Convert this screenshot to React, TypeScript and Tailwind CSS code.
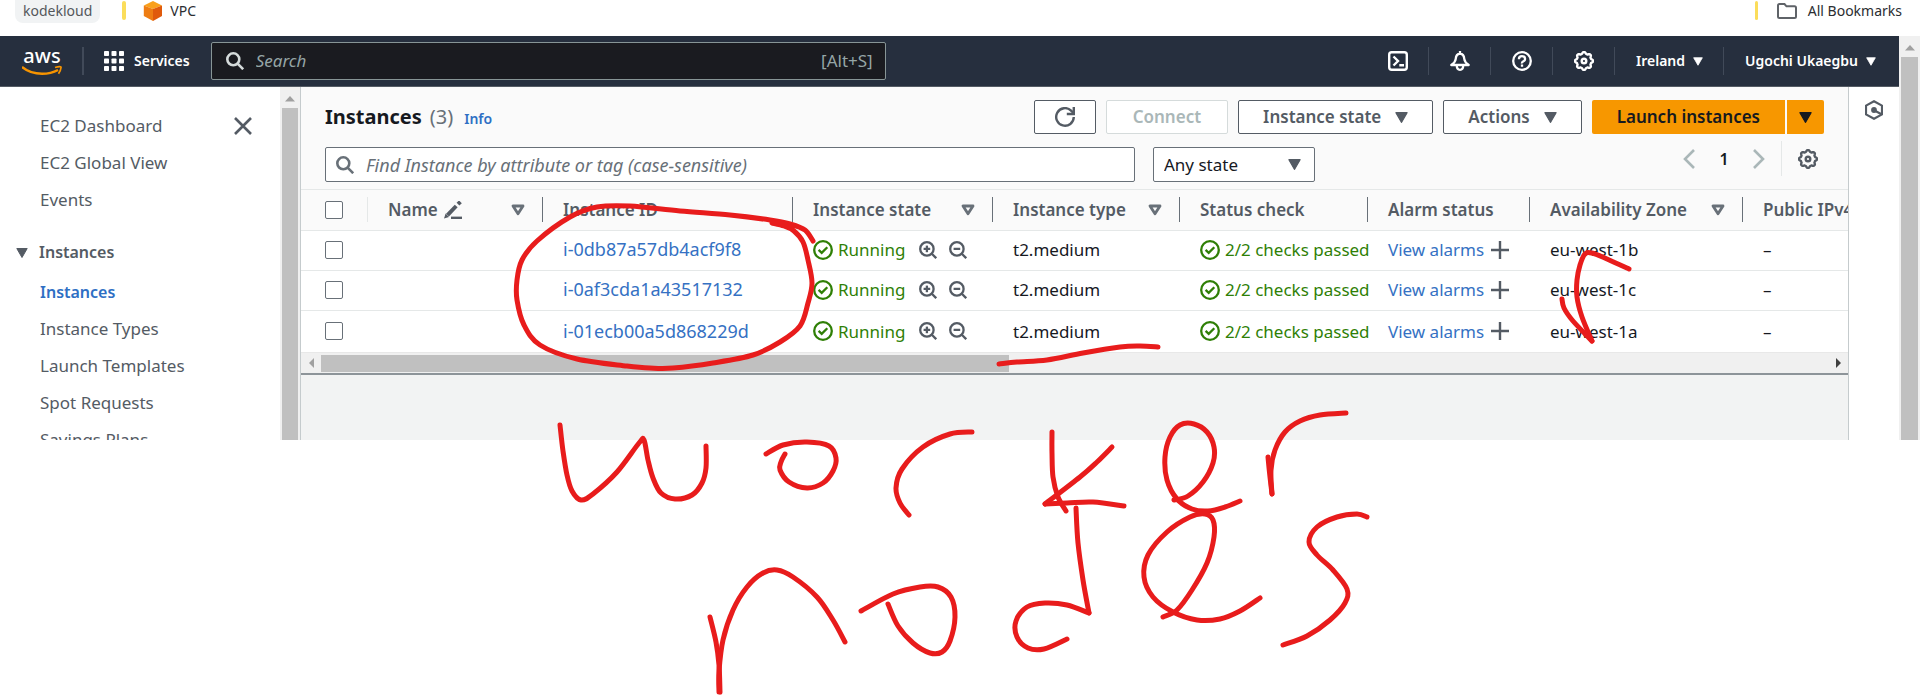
import React, { ReactNode } from 'react';

type Point = [number, number];

const instances = [
  { id: 'i-0db87a57db4acf9f8', state: 'Running', type: 't2.medium', check: '2/2 checks passed', zone: 'eu-west-1b' },
  { id: 'i-0af3cda1a43517132', state: 'Running', type: 't2.medium', check: '2/2 checks passed', zone: 'eu-west-1c' },
  { id: 'i-01ecb00a5d868229d', state: 'Running', type: 't2.medium', check: '2/2 checks passed', zone: 'eu-west-1a' },
];

function CaretDown({ className }: { className: string }) {
  return (
    <svg viewBox="0 0 12 10" className={className} aria-hidden="true">
      <path d="M.8.5h10.4L6 9.5z" fill="currentColor" stroke="currentColor" strokeLinejoin="round" />
    </svg>
  );
}

function FilterCaret() {
  return (
    <svg viewBox="0 0 14 12" className="h-3 w-3.5 shrink-0" aria-hidden="true">
      <path d="M2 2h10L7 9.8z" fill="none" stroke="#687078" strokeWidth="2.8" strokeLinejoin="round" />
    </svg>
  );
}

function Gear() {
  const outline = Array.from({ length: 64 }, (_, i) => {
    const a = (i / 64) * Math.PI * 2;
    const r = 8.1 + 0.8 * Math.tanh(3 * Math.cos(8 * a));
    return `${(10 + r * Math.cos(a)).toFixed(2)},${(10 + r * Math.sin(a)).toFixed(2)}`;
  }).join(' ');
  return (
    <svg viewBox="0 0 20 20" className="size-5 shrink-0" fill="none" stroke="currentColor" strokeWidth="2.4" aria-hidden="true">
      <polygon points={outline} strokeLinejoin="round" />
      <circle cx="10" cy="10" r="2.3" />
    </svg>
  );
}

function SearchIcon({ className }: { className: string }) {
  return (
    <svg viewBox="0 0 18 18" className={className} fill="none" stroke="currentColor" strokeWidth="2.6" aria-hidden="true">
      <circle cx="7.3" cy="7.3" r="6" />
      <path d="m11.6 11.6 5.6 5.6" />
    </svg>
  );
}

function StatusOk() {
  return (
    <svg viewBox="0 0 20 20" className="size-5 shrink-0" fill="none" stroke="currentColor" strokeWidth="2.3" aria-hidden="true">
      <circle cx="10" cy="10" r="8.8" />
      <path d="m5.6 9.8 3.1 3 5.6-5.6" />
    </svg>
  );
}

function Magnifier({ plus }: { plus?: boolean }) {
  return (
    <svg viewBox="0 0 18 18" className="size-[18px]" fill="none" stroke="currentColor" strokeWidth="2.3" aria-hidden="true">
      <circle cx="7.9" cy="7.9" r="6.7" />
      <path d="m12.8 12.8 4.4 4.4M4.6 7.9h6.6" />
      {plus && <path d="M7.9 4.6v6.6" />}
    </svg>
  );
}

function NavItem({ children, last, label }: { children: ReactNode; last?: boolean; label?: string }) {
  return (
    <button
      aria-label={label}
      className={`flex h-7 items-center gap-2 whitespace-nowrap pl-[21px] pr-5 text-sm font-semibold text-white ${last ? '' : 'border-r border-[#414a59]'}`}
    >
      {children}
    </button>
  );
}

function SideLink({ children }: { children: ReactNode }) {
  return (
    <li className="h-[37px]">
      <a href="#" className="text-[#545b64]">{children}</a>
    </li>
  );
}

function Th({ children, filter, last }: { children: ReactNode; filter?: boolean; last?: boolean }) {
  return (
    <th scope="col" className="p-0 text-left text-[17px] font-semibold text-[#545b64]">
      <div className={`flex h-[25px] items-center justify-between overflow-hidden whitespace-nowrap pl-5 ${last ? '' : 'border-r border-[#687078] pr-[17px]'}`}>
        <span className="flex items-center gap-1.5">{children}</span>
        {filter && <FilterCaret />}
      </div>
    </th>
  );
}

function Check({ label }: { label: string }) {
  return <input type="checkbox" aria-label={label} className="ml-6 block size-[18px] appearance-none rounded-xs border border-[#687078] bg-white" />;
}

const strokes: Point[][] = [
  [[772, 223], [784, 226], [794, 231], [803, 242], [808, 260], [812, 283], [808, 303], [800, 326], [780, 342], [753, 355], [713, 363], [673, 368], [650, 368], [627, 366], [577, 359], [540, 345], [524, 325], [517, 300], [517, 280], [522, 260], [537, 241], [570, 217], [597, 207], [630, 206], [680, 211], [730, 215], [770, 220], [790, 224], [805, 230], [813, 241]],
  [[999, 364], [1017, 362], [1047, 360], [1083, 353], [1120, 347], [1140, 346], [1158, 347]],
  [[1629, 269], [1607, 259], [1592, 253], [1585, 254], [1580, 265], [1577, 280], [1577, 297], [1582, 317], [1592, 341]],
  [[1592, 341], [1573, 321], [1564, 308], [1562, 299]],
  [[560, 425], [563, 451], [567, 475], [572, 491], [581, 500], [593, 494], [617, 472], [639, 443], [644, 440], [648, 460], [653, 478], [661, 493], [675, 499], [692, 495], [702, 483], [706, 468], [706, 446]],
  [[766, 454], [783, 445], [807, 442], [829, 446], [836, 458], [833, 471], [823, 483], [807, 488], [789, 482], [780, 470], [781, 462], [785, 454]],
  [[972, 432], [950, 434], [923, 447], [902, 469], [896, 488], [900, 503], [909, 515]],
  [[710, 617], [716, 642], [719, 665], [720, 692]],
  [[719, 692], [719, 671], [723, 640], [733, 610], [747, 587], [763, 573], [777, 570], [793, 577], [817, 597], [833, 620], [845, 642]],
  [[861, 611], [893, 594], [920, 587], [938, 587], [951, 597], [955, 617], [950, 641], [942, 652], [930, 653], [913, 643], [898, 626], [888, 604]],
  [[1052, 432], [1052, 453], [1053, 477], [1058, 497], [1066, 511]],
  [[1112, 447], [1097, 462], [1080, 477], [1045, 504]],
  [[1045, 504], [1067, 503], [1093, 502], [1124, 506]],
  [[1174, 500], [1188, 496], [1203, 482], [1213, 463], [1214, 447], [1207, 432], [1194, 424], [1180, 425], [1170, 437], [1165, 457], [1167, 480], [1177, 499], [1192, 509], [1208, 511], [1225, 507], [1240, 501]],
  [[1268, 457], [1270, 477], [1272, 494]],
  [[1272, 494], [1271, 470], [1275, 450], [1285, 432], [1300, 421], [1320, 415], [1346, 413]],
  [[1076, 508], [1078, 543], [1083, 580], [1089, 613]],
  [[1089, 613], [1067, 605], [1045, 603], [1027, 607], [1016, 621], [1017, 637], [1028, 648], [1044, 649], [1067, 639]],
  [[1163, 617], [1177, 610], [1192, 590], [1207, 563], [1214, 537], [1213, 520], [1205, 514], [1190, 517], [1167, 532], [1148, 555], [1144, 577], [1153, 597], [1173, 612], [1197, 620], [1220, 619], [1240, 611], [1260, 598]],
  [[1367, 517], [1357, 514], [1337, 517], [1317, 527], [1309, 542], [1317, 555], [1333, 570], [1347, 589], [1345, 603], [1330, 620], [1307, 636], [1283, 645]],
];

/* Catmull-Rom spline through the pen's sample points. */
function smooth(points: Point[]) {
  let d = `M${points[0][0]} ${points[0][1]}`;
  for (let i = 0; i < points.length - 1; i++) {
    const p0 = points[Math.max(i - 1, 0)];
    const p1 = points[i];
    const p2 = points[i + 1];
    const p3 = points[Math.min(i + 2, points.length - 1)];
    const at = (k: 0 | 1) => [(p1[k] + (p2[k] - p0[k]) / 6).toFixed(1), (p2[k] - (p3[k] - p1[k]) / 6).toFixed(1)];
    const [ax, bx] = at(0);
    const [ay, by] = at(1);
    d += `C${ax} ${ay} ${bx} ${by} ${p2[0]} ${p2[1]}`;
  }
  return d;
}

function PenLayer() {
  return (
    <svg width="1920" height="700" className="pointer-events-none absolute left-0 top-0" fill="none" stroke="#e81c1c" strokeWidth="5" strokeLinecap="round" strokeLinejoin="round" aria-hidden="true">
      {strokes.map((s, i) => <path key={i} d={smooth(s)} />)}
    </svg>
  );
}

function BookmarksBar() {
  return (
    <div className="flex h-9 items-start justify-between text-sm leading-[22px] text-[#2b2d31]">
      <div className="flex items-start pl-[15px]">
        <a href="#" className="rounded-b-lg bg-[#f1f3f4] px-2 pb-px text-[#54575b]">kodekloud</a>
        <span className="ml-[22px] mt-px h-[19px] w-1 rounded-sm bg-[#fbdd5b]" />
        <a href="#" className="ml-[17px] flex items-start gap-[7px]">
          <svg viewBox="0 0 20 20" className="mt-px size-5" aria-hidden="true">
            <path d="M10 0 19 4.6 10 8 .8 4.6z" fill="#f9a01b" />
            <path d="M.8 4.6 10 8v12L.8 15z" fill="#ee7d13" />
            <path d="M19 4.6 10 8v12l9-5z" fill="#e05a0c" />
          </svg>
          VPC
        </a>
      </div>
      <div className="flex items-start pr-[18px]">
        <span className="mt-px h-[19px] w-[3px] rounded-sm bg-[#fbdd5b]" />
        <a href="#" className="ml-[19px] flex items-start gap-[11px]">
          <svg viewBox="0 0 20 16" className="mt-[3px] h-4 w-5" aria-hidden="true">
            <path d="M1 2.5Q1 1 2.5 1h5l2 2.3h8Q19 3.3 19 4.8v8.7q0 1.5-1.5 1.5h-15Q1 15 1 13.5z" fill="none" stroke="#5f6368" strokeWidth="2" />
          </svg>
          All Bookmarks
        </a>
      </div>
    </div>
  );
}

function TopNav() {
  return (
    <header className="flex h-[51px] items-start justify-between border-b border-[#545b64] bg-[#262f3e] pt-1.5">
      <div className="flex flex-1 items-center">
        <a href="#" aria-label="AWS home" className="ml-[22px] flex w-10 flex-col items-center">
          <span className="h-[18px] text-xl font-medium leading-[17px] text-white">aws</span>
          <svg viewBox="0 0 40 11" className="h-[11px] w-10" fill="none" stroke="#f79400" aria-hidden="true">
            <path d="M0 2Q8 8.8 20 8.8 29 8.8 36 5" strokeWidth="2.4" />
            <path d="M33 2.500q6.500-2 6 .2-.2 2.600-2.500 6" strokeWidth="1.7" />
          </svg>
        </a>
        <span className="ml-5 h-7 w-0.5 bg-[#414a59]" />
        <button className="ml-5 flex items-center gap-2.5 text-sm font-semibold text-white">
          <svg viewBox="0 0 20 20" className="size-5" fill="currentColor" aria-hidden="true">
            {[0, 7.5, 15].map((y) => [0, 7.5, 15].map((x) => <rect key={`${x}-${y}`} x={x} y={y} width="5" height="5" rx=".8" />))}
          </svg>
          Services
        </button>
        <label className="ml-[21px] flex h-[38px] w-full max-w-[675px] items-center rounded-xs border border-[#879596] bg-[#1a1b20] pl-3.5 pr-3 text-[17px] text-[#95a5a6]">
          <SearchIcon className="size-[18px] shrink-0 text-[#d5dbdb]" />
          <input type="search" aria-label="Search" placeholder="Search" className="ml-3 min-w-0 flex-1 bg-transparent italic outline-none placeholder:text-[#95a5a6]" />
          <span>[Alt+S]</span>
        </label>
      </div>
      <nav className="mt-[5px] flex pr-[3px]">
        <NavItem label="CloudShell">
          <svg viewBox="0 0 20 20" className="size-5" fill="none" stroke="currentColor" strokeWidth="2.4" aria-hidden="true">
            <rect x="1.2" y="1.2" width="17.6" height="17.6" rx="2.500" />
            <path d="m5.500 5.500 4.500 4.500-4.500 4.500M11.300 14.200h4.700" />
          </svg>
        </NavItem>
        <NavItem label="Notifications">
          <svg viewBox="0 0 20 20" className="size-5" fill="none" stroke="currentColor" strokeWidth="2.300" strokeLinejoin="round" aria-hidden="true">
            <path d="M10 2.500Q6 3 5.700 8 5.500 11 1.300 14h17.400q-4.200-3-4.400-6Q14 3 10 2.500zM10 0v2.500" />
            <path d="M6.800 14.500q0 4.300 3.200 4.300t3.200-4.300" />
          </svg>
        </NavItem>
        <NavItem label="Help">
          <svg viewBox="0 0 20 20" className="size-5" fill="none" stroke="currentColor" strokeWidth="2.300" aria-hidden="true">
            <circle cx="10" cy="10" r="8.800" />
            <path d="M6.900 8.200q0-3 3.100-3t3.100 2.700q0 1.500-1.700 2.300T10 12.500M10 13.600v2.200" />
          </svg>
        </NavItem>
        <NavItem label="Settings"><Gear /></NavItem>
        <NavItem>Ireland<CaretDown className="h-[9px] w-2.5" /></NavItem>
        <NavItem last>Ugochi Ukaegbu<CaretDown className="h-[9px] w-2.5" /></NavItem>
      </nav>
    </header>
  );
}

function Sidebar() {
  return (
    <aside className="flex w-[300px] shrink-0 overflow-hidden">
      <div className="flex-1 pt-5 text-[17px] leading-[37px]">
        <div className="flex justify-between pl-10 pr-7">
          <ul>
            <SideLink>EC2 Dashboard</SideLink>
            <SideLink>EC2 Global View</SideLink>
            <SideLink>Events</SideLink>
          </ul>
          <button aria-label="Close navigation" className="h-[38px] text-[#545b64]">
            <svg viewBox="0 0 18 18" className="size-[18px]" fill="none" stroke="currentColor" strokeWidth="2.600" aria-hidden="true">
              <path d="m1 1 16 16M17 1 1 17" />
            </svg>
          </button>
        </div>
        <button className="mt-4 flex items-center gap-[11px] pl-4 text-base leading-[37px] font-semibold text-[#545b64]">
          <CaretDown className="h-2.5 w-3" />
          Instances
        </button>
        <ul className="pl-10 pt-0.5">
          <li className="h-[37px]"><a href="#" aria-current="page" className="text-base font-semibold text-[#2e6fc4]">Instances</a></li>
          <SideLink>Instance Types</SideLink>
          <SideLink>Launch Templates</SideLink>
          <SideLink>Spot Requests</SideLink>
          <SideLink>Savings Plans</SideLink>
        </ul>
      </div>
      <div className="flex w-5 shrink-0 flex-col items-center bg-[#f0f0f0]">
        <svg viewBox="0 0 10 6" className="my-[9px] h-1.5 w-2.5 shrink-0 fill-[#a0a0a0]" aria-hidden="true"><path d="M5 0l5 5.500H0z" /></svg>
        <span className="mt-[-3px] w-4 flex-1 bg-[#c0c0c0]" />
      </div>
    </aside>
  );
}

const button = 'flex h-[34px] items-center rounded-xs border bg-white text-[17px] font-semibold';

function Toolbar() {
  return (
    <div className="border-b border-[#e5e8e8] px-6 pb-[7px] pt-[13px]">
      <div className="flex items-center justify-between">
        <h1 className="flex items-baseline text-xl leading-8 font-bold text-[#16191f]">
          Instances
          <span className="ml-2 font-normal text-[#687078]">(3)</span>
          <a href="#" className="ml-[11px] text-sm font-semibold text-[#2e6fc4]">Info</a>
        </h1>
        <div className="flex gap-2.5 text-[#545b64]">
          <button aria-label="Refresh" className={`${button} border-[#545b64] px-5`}>
            <svg viewBox="0 0 20 20" className="size-5" fill="none" stroke="currentColor" strokeWidth="2.400" aria-hidden="true">
              <path d="M18.800 10a8.800 8.800 0 1 1-2.700-6.400L18.400 6" />
              <path d="M18.800 0v7h-7" />
            </svg>
          </button>
          <button disabled className={`${button} border-[#d5dbdb] px-[26px] text-[#aab7b8]`}>Connect</button>
          <button className={`${button} gap-3.5 border-[#545b64] px-6`}>Instance state<CaretDown className="h-[11px] w-[13px]" /></button>
          <button className={`${button} gap-3.5 border-[#545b64] px-6`}>Actions<CaretDown className="h-[11px] w-[13px]" /></button>
          <div className="flex gap-0.5 text-[#16191f]">
            <button className="h-[34px] rounded-l-xs bg-[#f79700] px-[25px] text-[17px] font-semibold">Launch instances</button>
            <button aria-label="More launch options" className="h-[34px] rounded-r-xs bg-[#f79700] px-3"><CaretDown className="h-[11px] w-[13px]" /></button>
          </div>
        </div>
      </div>
      <div className="mt-[13px] flex">
        <label className="flex h-[35px] max-w-[810px] flex-1 items-center rounded-xs border border-[#687078] bg-white px-2.5 text-[#687078]">
          <SearchIcon className="size-[18px] shrink-0" />
          <input aria-label="Find Instance" placeholder="Find Instance by attribute or tag (case-sensitive)" className="ml-3 min-w-0 flex-1 bg-transparent text-lg italic outline-none placeholder:text-[#687078]" />
        </label>
        <div className="relative ml-[18px] w-[162px]">
          <select aria-label="State filter" className="h-[35px] w-full appearance-none rounded-xs border border-[#687078] bg-white px-2.5 text-[17px] text-[#16191f]">
            <option>Any state</option>
          </select>
          <CaretDown className="pointer-events-none absolute right-3.5 top-3 h-[11px] w-[13px] text-[#545b64]" />
        </div>
        <div className="-mt-1.5 ml-auto flex h-[35px] items-center pr-1.5 text-[#aab7b8]">
          <button aria-label="Previous page">
            <svg viewBox="0 0 12 20" className="h-5 w-3" fill="none" stroke="currentColor" strokeWidth="2.600" aria-hidden="true"><path d="M11 1 2 10l9 9" /></svg>
          </button>
          <button className="w-[58px] text-base font-semibold text-[#16191f]">1</button>
          <button aria-label="Next page">
            <svg viewBox="0 0 12 20" className="h-5 w-3" fill="none" stroke="currentColor" strokeWidth="2.600" aria-hidden="true"><path d="m1 1 9 9-9 9" /></svg>
          </button>
          <span className="mx-4 h-[35px] w-px bg-[#e5e8e8]" />
          <button aria-label="Preferences" className="text-[#545b64]"><Gear /></button>
        </div>
      </div>
    </div>
  );
}

function InstancesTable() {
  return (
    <div className="overflow-hidden">
      <table className="w-full min-w-[1546px] table-fixed border-collapse whitespace-nowrap bg-white text-[17px] text-[#16191f]">
        <colgroup>
          <col className="w-[67px]" />
          <col className="w-[175px]" />
          <col className="w-[250px]" />
          <col className="w-[200px]" />
          <col className="w-[187px]" />
          <col className="w-[188px]" />
          <col className="w-[162px]" />
          <col className="w-[213px]" />
          <col />
        </colgroup>
        <thead className="h-10 border-b border-[#e5e8e8] bg-[#fafafa]">
          <tr>
            <th scope="col" className="p-0">
              <div className="flex h-[25px] items-center border-r border-[#e5e8e8]"><Check label="Select all instances" /></div>
            </th>
            <Th filter>
              Name
              <svg viewBox="0 0 18 18" className="size-[18px]" fill="none" stroke="currentColor" aria-hidden="true">
                <path d="M3.500 14.200 12.200 5" strokeWidth="4" />
                <path d="M0 17.600 1.600 12.600 5 16z" fill="currentColor" stroke="none" />
                <path d="m14 3.200 2.400-2.400" strokeWidth="4" />
                <path d="M7 16.800h11" strokeWidth="2.400" />
              </svg>
            </Th>
            <Th>Instance ID</Th>
            <Th filter>Instance state</Th>
            <Th filter>Instance type</Th>
            <Th>Status check</Th>
            <Th>Alarm status</Th>
            <Th filter>Availability Zone</Th>
            <Th last>Public IPv4 DNS</Th>
          </tr>
        </thead>
        <tbody>
          {instances.map((row) => (
            <tr key={row.id} className="h-10 border-b border-[#e5e8e8] last:h-[42px] last:border-0">
              <td className="p-0"><Check label={`Select ${row.id}`} /></td>
              <td className="p-0" />
              <td className="p-0 pl-5"><a href="#" className="text-lg leading-6 text-[#3571c3]">{row.id}</a></td>
              <td className="p-0 pl-5">
                <div className="flex items-center text-[#2f7f06]">
                  <StatusOk />
                  <span className="ml-[5px] w-[81px]">{row.state}</span>
                  <span className="flex gap-3 text-[#545b64]">
                    <button aria-label="Show only matching"><Magnifier plus /></button>
                    <button aria-label="Exclude matching"><Magnifier /></button>
                  </span>
                </div>
              </td>
              <td className="p-0 pl-5">{row.type}</td>
              <td className="p-0 pl-5">
                <div className="flex items-center gap-[5px] text-[#2f7f06]"><StatusOk />{row.check}</div>
              </td>
              <td className="p-0 pl-5">
                <div className="flex items-center gap-[7px]">
                  <a href="#" className="text-[#3571c3]">View alarms</a>
                  <button aria-label="Add alarm" className="text-[#545b64]">
                    <svg viewBox="0 0 18 18" className="size-[18px]" stroke="currentColor" strokeWidth="2.400" aria-hidden="true"><path d="M9 0v18M0 9h18" /></svg>
                  </button>
                </div>
              </td>
              <td className="p-0 pl-5">{row.zone}</td>
              <td className="p-0 pl-5">–</td>
            </tr>
          ))}
        </tbody>
      </table>
      <div className="flex h-[21px] items-center border-t border-[#e8e8e8] bg-[#f0f0f0]">
        <svg viewBox="0 0 5 10" className="ml-2 mr-[7px] h-2.5 w-[5px] fill-[#a0a0a0]" aria-hidden="true"><path d="M5 0v10L0 5z" /></svg>
        <span className="h-[17px] w-[688px] bg-[#c0c0c0]" />
        <svg viewBox="0 0 5 10" className="ml-auto mr-[7px] h-2.5 w-[5px] fill-[#404040]" aria-hidden="true"><path d="M0 0v10l5-5z" /></svg>
      </div>
    </div>
  );
}

export default function App() {
  return (
    <div className="relative min-h-screen bg-white font-['Noto_Sans',sans-serif]">
      <BookmarksBar />
      <div className="flex h-[404px] overflow-hidden">
        <div className="flex min-w-0 flex-1 flex-col">
          <TopNav />
          <div className="flex min-h-0 flex-1">
            <Sidebar />
            <main className="min-w-0 flex-1 border-x border-[#c5cbcd] bg-[#f2f3f3]">
              <section className="border-b-2 border-[#8d9499] bg-[#fafafa]">
                <Toolbar />
                <InstancesTable />
              </section>
            </main>
            <aside className="w-[50px] shrink-0 pl-4 pt-[13px]">
              <button aria-label="Open tools" className="text-[#545b64]">
                <svg viewBox="0 0 18 20" className="h-5 w-[18px]" fill="none" stroke="currentColor" strokeWidth="2.200" strokeLinejoin="round" aria-hidden="true">
                  <path d="M9 1.200 17 5.600v8.800L9 18.800l-8-4.400V5.600z" />
                  <circle cx="9" cy="10" r="1.800" fill="currentColor" />
                  <path d="m9.500 10.500 7 3.800" />
                </svg>
              </button>
            </aside>
          </div>
        </div>
        <div className="flex w-[21px] shrink-0 flex-col items-center bg-[#f0f0f0]">
          <svg viewBox="0 0 10 6" className="my-[9px] h-1.5 w-2.5 shrink-0 fill-[#a0a0a0]" aria-hidden="true"><path d="M5 0l5 5.500H0z" /></svg>
          <span className="mt-[-3px] w-[17px] flex-1 bg-[#c0c0c0]" />
        </div>
      </div>
      <PenLayer />
    </div>
  );
}
